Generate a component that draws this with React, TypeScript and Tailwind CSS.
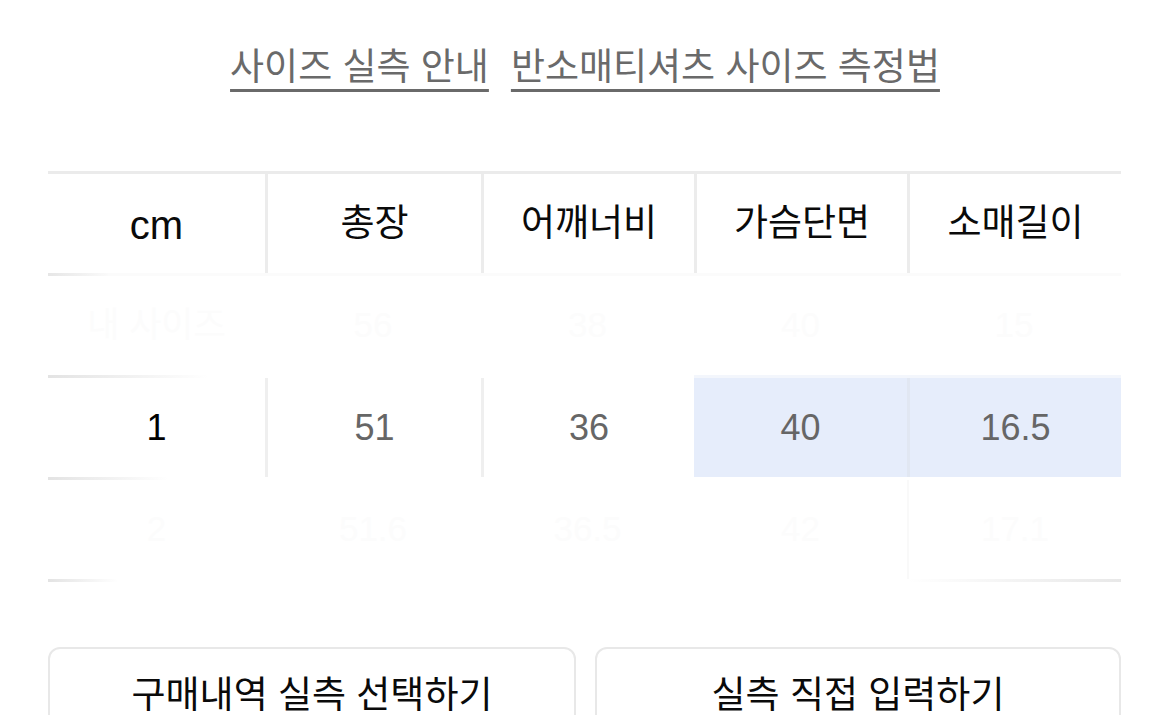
import React from "react";

const cols = "grid grid-cols-[217px_216px_213px_213px_214px]";

export default function App() {
  return (
    <div className="w-[1170px] h-[715px] overflow-hidden bg-white font-['Liberation_Sans','Noto_Sans_CJK_KR',sans-serif]">
      <div className="flex justify-center gap-[22px] pt-[43px] text-[37px] leading-[50px] text-[#6a6a6a]">
        <span className="underline decoration-[3px] underline-offset-[9px]">사이즈 실측 안내</span>
        <span className="underline decoration-[3px] underline-offset-[9px]">반소매티셔츠 사이즈 측정법</span>
      </div>

      <div className="mx-[48px] mt-[78px] w-[1073px]">
        {/* header */}
        <div className="h-[3px] bg-[#ebebeb]" />
        <div className={`${cols} h-[99px] text-[37px] text-[#0a0a0a]`}>
          <div className="flex items-center justify-center text-[40px] pt-[2px]">cm</div>
          <div className="flex items-center justify-center border-l-[3px] border-[#ececec]">총장</div>
          <div className="flex items-center justify-center border-l-[3px] border-[#ececec]">어깨너비</div>
          <div className="flex items-center justify-center border-l-[3px] border-[#ececec]">가슴단면</div>
          <div className="flex items-center justify-center border-l-[3px] border-[#ececec]">소매길이</div>
        </div>

        {/* ghost row */}
        <div className="h-[3px] flex">
          <div className="w-[60px] h-full bg-linear-to-r from-[#e6e6e6] to-[#fafafa]" />
          <div className="flex-1 h-full bg-[#fbfbfb]" />
        </div>
        <div className={`${cols} h-[99px] text-[35px] text-[#fcfcfc]`}>
          <div className="flex items-center justify-center">내 사이즈</div>
          <div className="flex items-center justify-center">56</div>
          <div className="flex items-center justify-center">38</div>
          <div className="flex items-center justify-center">40</div>
          <div className="flex items-center justify-center">15</div>
        </div>

        {/* selected row */}
        <div className="h-[3px] flex">
          <div className="w-[160px] h-full bg-linear-to-r from-[#e3e3e3] to-transparent" />
          <div className="flex-1 h-full" />
          <div className="w-[427px] h-full bg-[#f3f6fc]" />
        </div>
        <div className={`${cols} h-[99px] text-[36px] text-[#666]`}>
          <div className="flex items-center justify-center text-black">1</div>
          <div className="flex items-center justify-center border-l-[3px] border-[#efefef]">51</div>
          <div className="flex items-center justify-center border-l-[3px] border-[#efefef]">36</div>
          <div className="flex items-center justify-center bg-[#e6edfb]">40</div>
          <div className="flex items-center justify-center bg-[#e6edfb] border-l-[3px] border-[#e1e7f2]">16.5</div>
        </div>

        {/* ghost row 2 */}
        <div className="h-[3px] flex">
          <div className="w-[120px] h-full bg-linear-to-r from-[#e3e3e3] to-transparent" />
        </div>
        <div className={`${cols} h-[99px] text-[35px] text-[#fcfcfc]`}>
          <div className="flex items-center justify-center">2</div>
          <div className="flex items-center justify-center">51.6</div>
          <div className="flex items-center justify-center">36.5</div>
          <div className="flex items-center justify-center">42</div>
          <div className="flex items-center justify-center border-l-[2px] border-[#f9f9f9]">17.1</div>
        </div>
        <div className="h-[3px] flex">
          <div className="w-[70px] h-full bg-linear-to-r from-[#e3e3e3] to-transparent" />
          <div className="flex-1 h-full" />
          <div className="w-[214px] h-full bg-linear-to-r from-transparent to-[#e8e8e8]" />
        </div>
      </div>

      <div className="mx-[48px] mt-[65px] flex gap-[19px] w-[1073px]">
        <div className="w-[528px] h-[100px] rounded-[12px] border-[2px] border-[#e8e8e8] flex justify-center pt-[22px] text-[37px] leading-[50px] text-[#0a0a0a]">
          구매내역 실측 선택하기
        </div>
        <div className="w-[526px] h-[100px] rounded-[12px] border-[2px] border-[#e8e8e8] flex justify-center pt-[22px] text-[37px] leading-[50px] text-[#0a0a0a]">
          실측 직접 입력하기
        </div>
      </div>
    </div>
  );
}
